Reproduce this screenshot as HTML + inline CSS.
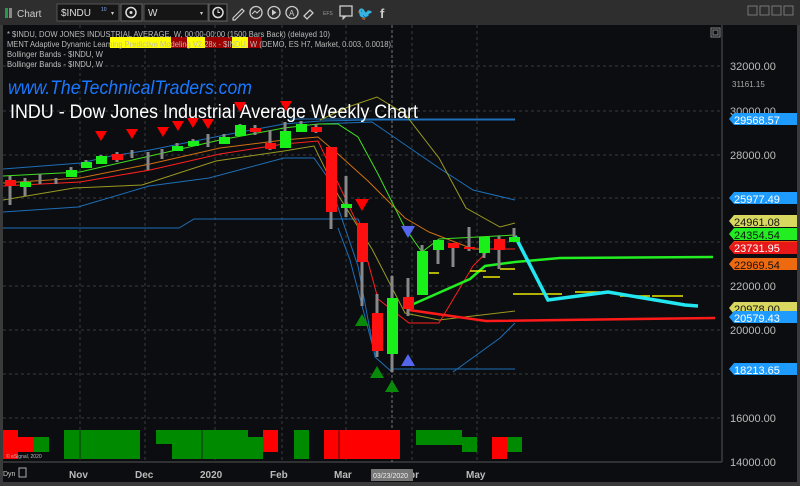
<!DOCTYPE html>
<html><head><meta charset="utf-8"><style>
body{margin:0;background:#1a1a1a;width:800px;height:486px;overflow:hidden;font-family:"Liberation Sans",sans-serif}
svg{display:block}
</style></head><body>
<svg width="800" height="486" viewBox="0 0 800 486" font-family="Liberation Sans, sans-serif">
<rect width="800" height="486" fill="#3a3a3a"/>
<rect x="0" y="0" width="800" height="25" fill="#2e2e2e"/>
<rect x="5" y="8" width="3" height="10" fill="#2a9a4a"/><rect x="9" y="8" width="3" height="10" fill="#888"/>
<text x="17" y="17" font-size="10" fill="#ccc">Chart</text>
<rect x="57" y="4" width="62" height="17" fill="#151515" stroke="#555"/>
<text x="61" y="16" font-size="10" fill="#ddd">$INDU</text><text x="101" y="11" font-size="5" fill="#8af">10</text><text x="111" y="15" font-size="6" fill="#ccc">▾</text>
<rect x="121" y="4" width="21" height="17" fill="#151515" stroke="#666"/><circle cx="131" cy="12.5" r="5" fill="none" stroke="#ddd" stroke-width="1.5"/><circle cx="131" cy="12.5" r="1.5" fill="#ddd"/>
<rect x="144" y="4" width="64" height="17" fill="#151515" stroke="#555"/><text x="148" y="16" font-size="10" fill="#ddd">W</text><text x="200" y="15" font-size="6" fill="#ccc">▾</text>
<rect x="209" y="4" width="18" height="17" fill="#151515" stroke="#666"/><circle cx="218" cy="12.5" r="5" fill="none" stroke="#ddd" stroke-width="1.5"/><path d="M218 9.5v3h2" stroke="#ddd" fill="none"/>
<path d="M233 18l9-9 2 2-9 9h-2z" fill="none" stroke="#ccc" stroke-width="1.2"/>
<circle cx="256" cy="12.5" r="6" fill="none" stroke="#ccc" stroke-width="1.3"/><path d="M252 14l3-3 2 2 3-3" stroke="#ccc" fill="none"/>
<circle cx="274" cy="12.5" r="6" fill="none" stroke="#ccc" stroke-width="1.3"/><path d="M272 9.5v6l4.5-3z" fill="#ccc"/>
<circle cx="292" cy="12.5" r="6" fill="none" stroke="#ccc" stroke-width="1.3"/><text x="289" y="16" font-size="8" fill="#ccc">A</text>
<path d="M304 16l6-6 3 3-6 6z" fill="none" stroke="#ccc" stroke-width="1.3"/>
<text x="323" y="15" font-size="5" fill="#999">EFS</text>
<rect x="340" y="6" width="12" height="10" fill="none" stroke="#ccc" stroke-width="1.3"/><path d="M343 16l0 3 3-3" fill="#ccc" stroke="#ccc"/>
<text x="357" y="18" font-size="13" fill="#ccc">🐦</text>
<text x="380" y="18" font-size="13" font-weight="bold" fill="#ccc">f</text>
<rect x="748" y="6" width="9" height="9" fill="none" stroke="#777"/><rect x="760" y="6" width="9" height="9" fill="none" stroke="#777"/><rect x="772" y="6" width="9" height="9" fill="none" stroke="#777"/><rect x="784" y="6" width="9" height="9" fill="none" stroke="#777"/>
<rect x="3" y="25" width="719" height="437" fill="#0c0d10"/>
<rect x="722" y="25" width="75" height="437" fill="#0c0d10"/>
<line x1="722" y1="25" x2="722" y2="462" stroke="#555"/>
<rect x="3" y="462" width="794" height="20" fill="#0c0d10"/>
<line x1="3" y1="462" x2="722" y2="462" stroke="#555"/>
<rect x="711" y="28" width="9" height="9" fill="none" stroke="#888"/><rect x="713" y="30" width="5" height="5" fill="none" stroke="#888"/>
<g stroke="#3a3a3a" stroke-dasharray="3,3" stroke-width="1">
<line x1="3" y1="66" x2="722" y2="66"/><line x1="3" y1="111" x2="722" y2="111"/><line x1="3" y1="155" x2="722" y2="155"/><line x1="3" y1="198" x2="722" y2="198"/><line x1="3" y1="242" x2="722" y2="242"/><line x1="3" y1="286" x2="722" y2="286"/><line x1="3" y1="330" x2="722" y2="330"/><line x1="3" y1="374" x2="722" y2="374"/><line x1="3" y1="418" x2="722" y2="418"/>
<line x1="80" y1="25" x2="80" y2="462"/><line x1="145" y1="25" x2="145" y2="462"/><line x1="215" y1="25" x2="215" y2="462"/><line x1="282" y1="25" x2="282" y2="462"/><line x1="346" y1="25" x2="346" y2="462"/><line x1="412" y1="25" x2="412" y2="462"/><line x1="477" y1="25" x2="477" y2="462"/>
</g>
<line x1="392" y1="25" x2="392" y2="462" stroke="#777" stroke-dasharray="3,2"/>
<rect x="110" y="37" width="61" height="11" fill="#ffff00"/><rect x="171" y="37" width="16" height="11" fill="#9a0000"/><rect x="187" y="37" width="18" height="11" fill="#ffff00"/><rect x="205" y="37" width="27" height="11" fill="#9a0000"/><rect x="232" y="37" width="16" height="11" fill="#ffff00"/><rect x="248" y="37" width="14" height="11" fill="#9a0000"/>
<g font-size="8" fill="#bbb">
<text x="7" y="37" textLength="323" lengthAdjust="spacingAndGlyphs">* $INDU, DOW JONES INDUSTRIAL AVERAGE, W, 00:00-00:00 (1500 Bars Back) (delayed 10)</text>
<text x="7" y="47" textLength="384" lengthAdjust="spacingAndGlyphs">MENT Adaptive Dynamic Learning Predictive Modeling V2.28x - $INDU, W (DEMO, ES H7, Market, 0.003, 0.0018)</text>
<text x="7" y="57" textLength="96" lengthAdjust="spacingAndGlyphs">Bollinger Bands - $INDU, W</text>
<text x="7" y="67" textLength="96" lengthAdjust="spacingAndGlyphs">Bollinger Bands - $INDU, W</text>
</g>
<g fill="none" stroke-width="1">
<polyline stroke="#1d6fb8" points="3,169 81,163 111,156 150,150 230,134 284,124 320,121 372,120 515,120"/>
<line x1="290" y1="119" x2="515" y2="119" stroke="#1d6fb8"/>
<polyline stroke="#1d6fb8" points="318,124 372,122 439,168 473,190 515,200"/>
<polyline stroke="#1d6fb8" points="3,212 78,207 149,186 209,178 284,158 314,158 328,178 358,266 375,357 392,372"/>
<polyline stroke="#1d6fb8" points="453,372 500,338 515,323"/>
<line x1="392" y1="369" x2="515" y2="369" stroke="#1d6fb8"/>
<polyline stroke="#1d6fb8" points="3,228 179,228 194,219 358,219 362,228"/>
<polyline stroke="#1d6fb8" points="338,228 350,260 375,355"/>
<polyline stroke="#9a9a20" points="3,200 74,188 142,185 216,161 284,151 314,146 338,195 372,249 405,313 439,320 515,311"/>
<polyline stroke="#9a9a20" points="320,120 348,107 377,97 405,114 439,158 466,208 500,227 515,223"/>
<polyline stroke="#d07010" points="3,183 80,178 150,164 220,148 284,140 318,137 338,154 368,181 405,218 429,232 473,249 515,249"/>
<polyline stroke="#ff2020" points="3,186 80,182 150,170 220,154 284,144 318,141 358,225 378,299 409,323 439,323 473,266 490,249 515,249"/>
<polyline stroke="#40e020" points="3,176 80,172 150,156 220,140 284,128 318,124 338,124 358,137 378,174 405,228 422,252 439,239 515,235"/>
</g>
<polyline fill="none" stroke="#ff1a1a" stroke-width="2.5" points="409,310 486,321 715,318"/>
<polyline fill="none" stroke="#22ee22" stroke-width="2.5" points="409,306 470,279 485,266 515,262 560,258 713,257"/>
<g stroke="#e8e800" stroke-width="1.5"><line x1="429" y1="273" x2="439" y2="273"/><line x1="470" y1="271" x2="486" y2="271"/><line x1="483" y1="277" x2="500" y2="277"/><line x1="500" y1="269" x2="515" y2="269"/><line x1="513" y1="294" x2="562" y2="294"/><line x1="575" y1="292" x2="600" y2="292"/><line x1="620" y1="296" x2="650" y2="296"/><line x1="652" y1="296" x2="683" y2="296"/></g>
<polyline fill="none" stroke="#22e6f0" stroke-width="3.5" points="515,236 548,300 608,292 685,305 698,306"/>
<g stroke="#888" stroke-width="3">
<line x1="10" y1="176" x2="10" y2="205"/><line x1="25" y1="178" x2="25" y2="196"/><line x1="40" y1="174" x2="40" y2="184"/><line x1="56" y1="178" x2="56" y2="184"/><line x1="71" y1="167" x2="71" y2="177"/><line x1="86" y1="160" x2="86" y2="168"/><line x1="101" y1="155" x2="101" y2="164"/><line x1="117" y1="152" x2="117" y2="162"/><line x1="132" y1="150" x2="132" y2="158"/><line x1="148" y1="152" x2="148" y2="170"/><line x1="162" y1="149" x2="162" y2="159"/><line x1="177" y1="143" x2="177" y2="151"/><line x1="193" y1="139" x2="193" y2="146"/><line x1="208" y1="134" x2="208" y2="147"/><line x1="224" y1="134" x2="224" y2="144"/><line x1="240" y1="124" x2="240" y2="136"/><line x1="255" y1="125" x2="255" y2="135"/><line x1="270" y1="130" x2="270" y2="150"/><line x1="285" y1="122" x2="285" y2="148"/><line x1="301" y1="121" x2="301" y2="132"/><line x1="316" y1="124" x2="316" y2="133"/><line x1="331" y1="147" x2="331" y2="229"/><line x1="346" y1="176" x2="346" y2="217"/><line x1="362" y1="223" x2="362" y2="306"/><line x1="377" y1="294" x2="377" y2="357"/><line x1="392" y1="276" x2="392" y2="372"/><line x1="408" y1="278" x2="408" y2="316"/><line x1="422" y1="245" x2="422" y2="295"/><line x1="438" y1="240" x2="438" y2="264"/><line x1="453" y1="243" x2="453" y2="267"/><line x1="469" y1="227" x2="469" y2="251"/><line x1="484" y1="237" x2="484" y2="258"/><line x1="499" y1="236" x2="499" y2="269"/><line x1="514" y1="228" x2="514" y2="242"/>
</g>
<g fill="#ff1010"><rect x="5" y="180" width="11" height="6"/><rect x="112" y="154" width="11" height="6"/><rect x="250" y="128" width="11" height="4"/><rect x="265" y="143" width="11" height="6"/><rect x="311" y="127" width="11" height="5"/><rect x="326" y="147" width="11" height="65"/><rect x="357" y="223" width="11" height="39"/><rect x="372" y="313" width="11" height="38"/><rect x="403" y="297" width="11" height="12"/><rect x="448" y="243" width="11" height="5"/><rect x="464" y="247" width="11" height="2"/><rect x="494" y="239" width="11" height="11"/></g>
<g fill="#19f019"><rect x="20" y="182" width="11" height="5"/><rect x="66" y="170" width="11" height="7"/><rect x="81" y="162" width="11" height="6"/><rect x="96" y="156" width="11" height="8"/><rect x="172" y="146" width="11" height="5"/><rect x="188" y="141" width="11" height="5"/><rect x="219" y="137" width="11" height="7"/><rect x="235" y="125" width="11" height="11"/><rect x="280" y="131" width="11" height="17"/><rect x="296" y="124" width="11" height="8"/><rect x="341" y="204" width="11" height="4"/><rect x="387" y="298" width="11" height="56"/><rect x="417" y="251" width="11" height="44"/><rect x="433" y="240" width="11" height="10"/><rect x="479" y="237" width="11" height="16"/><rect x="509" y="237" width="11" height="5"/></g>
<g fill="#ff0000"><path d="M95,131h12l-6,10z"/><path d="M126,129h12l-6,10z"/><path d="M157,127h12l-6,10z"/><path d="M172,121h12l-6,10z"/><path d="M187,118h12l-6,10z"/><path d="M202,119h12l-6,10z"/><path d="M234,102h12l-6,10z"/><path d="M280,101h12l-6,10z"/><path d="M355,199h14l-7,12z"/></g>
<path d="M401,226h14l-7,12z" fill="#5566ee"/><path d="M401,366h14l-7,-12z" fill="#5566ee"/>
<g fill="#0a8a0a"><path d="M355,326h14l-7,-12z"/><path d="M370,378h14l-7,-12z"/><path d="M385,392h14l-7,-12z"/></g>
<g fill="#ff0000"><rect x="3" y="430" width="15" height="29"/><rect x="18" y="437" width="16" height="15"/><rect x="263" y="430" width="15" height="22"/><rect x="324" y="430" width="76" height="29"/><rect x="492" y="437" width="15" height="22"/></g>
<g fill="#008a00"><rect x="34" y="437" width="15" height="15"/><rect x="64" y="430" width="76" height="29"/><rect x="156" y="430" width="46" height="14"/><rect x="172" y="444" width="30" height="15"/><rect x="202" y="430" width="46" height="29"/><rect x="248" y="437" width="15" height="22"/><rect x="294" y="430" width="15" height="29"/><rect x="416" y="430" width="46" height="15"/><rect x="462" y="437" width="15" height="15"/><rect x="507" y="437" width="15" height="15"/></g>
<g stroke="#0c0d10" stroke-width="0.7"><line x1="80" y1="430" x2="80" y2="459"/><line x1="202" y1="430" x2="202" y2="459"/><line x1="339" y1="430" x2="339" y2="459"/></g>
<text x="6" y="458" font-size="5" fill="#bbb">© eSignal, 2020</text>
<text x="8" y="94" font-size="19" font-style="italic" fill="#1a78ff" textLength="244" lengthAdjust="spacingAndGlyphs">www.TheTechnicalTraders.com</text>
<text x="10" y="118" font-size="19" fill="#ffffff" textLength="408" lengthAdjust="spacingAndGlyphs">INDU - Dow Jones Industrial Average Weekly Chart</text>
<g font-size="11" fill="#bbb"><text x="730" y="70">32000.00</text><text x="730" y="115">30000.00</text><text x="730" y="159">28000.00</text><text x="730" y="290">22000.00</text><text x="730" y="334">20000.00</text><text x="730" y="422">16000.00</text><text x="730" y="466">14000.00</text></g>
<text x="732" y="87" font-size="8" fill="#aaa">31161.15</text>
<g font-size="11">
<path d="M729,119l5,-6h63v12h-63z" fill="#1e9bff"/><text x="734" y="124" fill="#fff">29568.57</text>
<path d="M729,198l5,-6h63v12h-63z" fill="#1e9bff"/><text x="734" y="203" fill="#fff">25977.49</text>
<path d="M729,221l5,-6h63v12h-63z" fill="#d8d860"/><text x="734" y="226" fill="#111">24961.08</text>
<path d="M729,247l5,-6h63v12h-63z" fill="#ee5010"/>
<path d="M729,234l5,-6h63v12h-63z" fill="#22ee22"/><text x="734" y="239" fill="#111">24354.54</text>
<path d="M729,248l5,-6h63v12h-63z" fill="#e81818"/><text x="734" y="252" fill="#fff">23731.95</text>
<path d="M729,264l5,-6h63v12h-63z" fill="#ee6a10"/><text x="734" y="269" fill="#111">22969.54</text>
<path d="M729,308l5,-6h63v12h-63z" fill="#d8d860"/><text x="734" y="313" fill="#111">20978.00</text>
<path d="M729,317l5,-6h63v12h-63z" fill="#1e9bff"/><text x="734" y="322" fill="#fff">20579.43</text>
<path d="M729,369l5,-6h63v12h-63z" fill="#1e9bff"/><text x="734" y="374" fill="#fff">18213.65</text>
</g>
<g font-size="10" font-weight="bold" fill="#bbb"><text x="69" y="478">Nov</text><text x="135" y="478">Dec</text><text x="200" y="478">2020</text><text x="270" y="478">Feb</text><text x="334" y="478">Mar</text><text x="409" y="478">pr</text><text x="466" y="478">May</text></g>
<rect x="371" y="469" width="42" height="12" fill="#777"/><text x="373" y="478" font-size="7" fill="#eee">03/23/2020</text>
<text x="3" y="476" font-size="7" fill="#ccc">Dyn</text><rect x="19" y="468" width="7" height="9" fill="none" stroke="#aaa"/>
</svg>
</body></html>
